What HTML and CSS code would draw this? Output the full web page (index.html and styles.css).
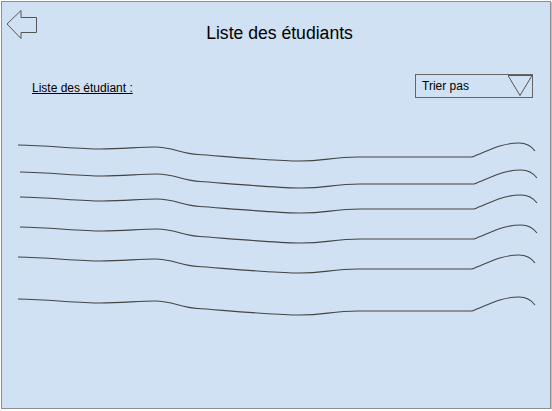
FILE: index.html
```html
<!DOCTYPE html>
<html lang="fr">
<head>
<meta charset="utf-8">
<title>Liste des étudiants</title>
<link rel="stylesheet" href="styles.css">
</head>
<body>
<div class="frame">
  <div class="header">
    <svg class="back" width="32" height="30" viewBox="0 0 32 30">
      <path d="M1,14 L15,0.5 L15,7.5 L30.5,7.5 L30.5,22.5 L15,22.5 L15,28.5 Z" fill="none" stroke="#555" stroke-width="1"/>
    </svg>
    <h1 class="title">Liste des étudiants</h1>
  </div>
  <div class="toolbar">
    <span class="label">Liste des étudiant :</span>
    <div class="select">
      <span class="select-text">Trier pas</span>
      <svg class="caret" width="24" height="22" viewBox="0 0 24 22">
        <path d="M0,0.5 L24,0.5 L12,20.5 Z" fill="none" stroke="#555" stroke-width="1"/>
      </svg>
    </div>
  </div>
  <svg class="rows" width="548" height="308" viewBox="2 98 548 308">
    <defs>
      <path id="wave" d="M0,0 C30,0.5 60,4 82,4 S120,2 137,2 S163,8.5 180,9.5 S250,15.5 278,16 S312,12 340,12 L454,12 C472,5 484,-2 501,-2 C509,-2 514,2 517,6"/>
    </defs>
    <g fill="none" stroke="#444" stroke-width="1.1">
      <use href="#wave" x="18" y="145"/>
      <use href="#wave" x="20" y="172"/>
      <use href="#wave" x="20" y="197"/>
      <use href="#wave" x="20" y="227"/>
      <use href="#wave" x="18" y="257"/>
      <use href="#wave" x="18" y="299"/>
    </g>
  </svg>
</div>
</body>
</html>
```

FILE: styles.css
```css
html, body {
  margin: 0;
  padding: 0;
  background: #ffffff;
}

body {
  font-family: "Liberation Sans", Arial, sans-serif;
  color: #000;
}

.frame {
  margin: 1px 0 0 1px;
  width: 548px;
  height: 406px;
  border: 1px solid #8e8e8e;
  background: #cfe1f2;
  box-shadow: 1px 1px 0 #bdbdbd;
  display: flex;
  flex-direction: column;
  overflow: hidden;
}

.header {
  height: 46px;
  box-sizing: border-box;
  padding: 8px 0 0 4px;
  display: flex;
  align-items: flex-start;
}

.back {
  display: block;
  flex: none;
}

.title {
  flex: 1;
  margin: 13px 29px 0 0;
  font-size: 17.6px;
  line-height: 21px;
  font-weight: normal;
  text-align: center;
}

.toolbar {
  display: flex;
  align-items: flex-start;
  padding: 26px 17px 0 30px;
}

.label {
  margin-top: 7px;
  font-size: 12px;
  line-height: 14px;
  text-decoration: underline;
}

.select {
  margin-left: auto;
  width: 118px;
  height: 24px;
  box-sizing: border-box;
  border: 1px solid #666;
  display: flex;
  justify-content: space-between;
  align-items: flex-start;
}

.select-text {
  padding-left: 6px;
  font-size: 12px;
  line-height: 22px;
}

.caret {
  display: block;
  flex: none;
}

.rows {
  display: block;
  flex: none;
}
```
